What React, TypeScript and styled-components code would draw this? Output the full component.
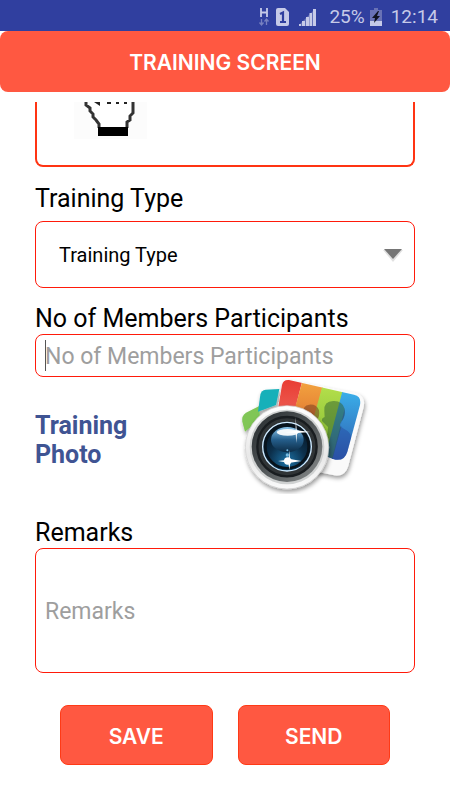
import React from "react";
import styled, { createGlobalStyle, css } from "styled-components";

const GlobalStyle = createGlobalStyle`
  *, *::before, *::after { box-sizing: border-box; }
  body {
    margin: 0;
    background: #fff;
    color: #000;
    font-family: Roboto, "Liberation Sans", sans-serif;
  }
`;

const Screen = styled.div`
  display: flex;
  flex-direction: column;
  min-height: 100vh;
  overflow: hidden;
`;

const StatusBar = styled.div`
  display: flex;
  align-items: center;
  justify-content: flex-end;
  height: 31px;
  padding: 3px 12px 0 0;
  background: #303f9f;
  color: #c6cae8;
  font-size: 19px;
  line-height: 24px;
`;

const StatusIcons = styled.svg`
  width: 58px;
  height: 20px;
  margin-right: 13px;
`;

const Battery = styled.svg`
  width: 12px;
  height: 18px;
  margin: 0 9px 0 5px;
`;

const TitleBar = styled.header`
  display: flex;
  align-items: center;
  justify-content: center;
  height: 61px;
  padding-top: 3px;
  border-radius: 8px;
  background: #ff5841;
`;

const Title = styled.h1`
  margin: 0;
  color: #fff;
  font-family: Inter, Roboto, sans-serif;
  font-size: 21px;
  font-weight: 600;
  line-height: 26px;
`;

const Form = styled.form`
  display: flex;
  flex-direction: column;
  padding: 10px 35px 35px;
`;

const outline = css`
  border: 1px solid #ff1a0a;
  border-radius: 8px;
  background: #fff;
`;

const PointerPanel = styled.div`
  height: 65px;
  margin-bottom: 17px;
  padding-left: 37px;
  border: 2px solid #ff3413;
  border-top: 0;
  border-radius: 0 0 8px 8px;
`;

const PointerArt = styled.svg`
  display: block;
  width: 74px;
  height: 38px;
`;

const Label = styled.label`
  font-size: 25px;
  line-height: 30px;
`;

const SelectFrame = styled.div`
  ${outline}
  display: grid;
  align-items: center;
  height: 67px;
  margin: 7px 0 16px;
`;

const Select = styled.select`
  grid-area: 1 / 1;
  width: 100%;
  height: 100%;
  padding: 0 48px 0 23px;
  border: 0;
  outline: 0;
  appearance: none;
  background: transparent;
  color: #000;
  font: 20px Roboto, sans-serif;
`;

const Arrow = styled.svg`
  grid-area: 1 / 1;
  justify-self: end;
  width: 22px;
  height: 16px;
  margin-right: 10px;
  pointer-events: none;
`;

const InputFrame = styled.div`
  ${outline}
  display: grid;
  align-items: center;
  height: 43px;
`;

const Input = styled.input`
  grid-area: 1 / 1;
  width: 100%;
  height: 100%;
  padding: 2px 9px 0;
  border: 0;
  outline: 0;
  background: transparent;
  color: #000;
  font: 23px Roboto, sans-serif;
  &::placeholder { color: #9e9e9e; opacity: 1; }
`;

const Caret = styled.span`
  grid-area: 1 / 1;
  width: 1px;
  height: 31px;
  margin-left: 9px;
  background: #555;
  pointer-events: none;
`;

const PhotoRow = styled.div`
  display: grid;
  grid-template-columns: 1fr 175px;
  align-items: center;
  margin-bottom: 24px;
`;

const PhotoLabel = styled.span`
  max-width: 120px;
  padding-top: 8px;
  color: #3f5493;
  font-size: 25px;
  font-weight: 700;
  line-height: 29px;
`;

const PhotoButton = styled.button`
  justify-self: start;
  padding: 0;
  border: 0;
  background: none;
  cursor: pointer;
`;

const CameraArt = styled.svg`
  display: block;
  width: 130px;
  height: 117px;
`;

const TextArea = styled.textarea`
  ${outline}
  display: block;
  width: 100%;
  height: 125px;
  padding: 49px 9px 46px;
  outline: 0;
  resize: none;
  overflow: hidden;
  font: 23px/28px Roboto, sans-serif;
  &::placeholder { color: #9e9e9e; opacity: 1; }
`;

const Actions = styled.div`
  display: grid;
  grid-template-columns: 1fr 1fr;
  gap: 25px;
  padding: 32px 25px 0;
`;

const ActionButton = styled.button`
  height: 60px;
  padding: 3px 0 0;
  border: 1px solid #ff3a16;
  border-radius: 8px;
  background: #ff5841;
  color: #fff;
  font: 600 21px Inter, Roboto, sans-serif;
  cursor: pointer;
`;

function Signals() {
  return (
    <StatusIcons viewBox="0 0 58 20" aria-hidden="true">
      <path d="M3 1V10M9 1V10M3 5.5H9" stroke="#c6cae8" strokeWidth="1.8" fill="none" />
      <path d="M3.5 12V17M1.5 15.5L3.5 18L5.5 15.5M8.5 18V13M6.5 14.5L8.5 12L10.5 14.5" stroke="#7780c0" strokeWidth="1.3" fill="none" />
      <path d="M20 1H27L31 5V17Q31 19 29 19H20Q18 19 18 17V3Q18 1 20 1Z" fill="#c6cae8" />
      <path d="M22 7L25 5.5V15M22 15H28" stroke="#303f9f" strokeWidth="2.2" fill="none" />
      <path d="M41 17H43V19H41ZM44 14H47V19H44ZM48 10H51V19H48ZM51.5 6H54V19H51.5ZM55 2H58V19H55Z" fill="#c6cae8" />
      <path d="M41 18L57 2V19H41Z" fill="#c6cae8" opacity="0.35" />
    </StatusIcons>
  );
}

function Hand() {
  return (
    <PointerArt viewBox="0 0 74 38" aria-hidden="true">
      <rect width="73" height="37" fill="#fcfcfc" />
      <path d="M14 0L18 6L20 11L23 16L26 21V27H54V20L57 13L60 10V0Z" fill="#fff" />
      <path d="M12 0V3L16 6V9L19 12V15L22 18L25 22V26M59 0V11L56 14V18L53 20V26" fill="none" stroke="#333" strokeWidth="3" />
      <path d="M20 0L26 4V0ZM33 0H37V2H33ZM42 0H45V2H42ZM50 0H53V2H50Z" fill="#222" />
      <rect x="24" y="25" width="30" height="9" fill="#000" />
    </PointerArt>
  );
}

function Camera() {
  return (
    <CameraArt viewBox="30 24 390 351" aria-hidden="true">
      <defs>
        <linearGradient id="red" x1="0" y1="0" x2="0" y2="1"><stop stopColor="#e8392f" /><stop offset="1" stopColor="#ef6b62" /></linearGradient>
        <linearGradient id="orange" x1="0" y1="0" x2="0" y2="1"><stop stopColor="#f4a640" /><stop offset="1" stopColor="#d9652c" /></linearGradient>
        <linearGradient id="green" x1="0" y1="0" x2="0" y2="1"><stop stopColor="#b5e04c" /><stop offset="1" stopColor="#7fb62f" /></linearGradient>
        <linearGradient id="blue" x1="0" y1="0" x2="0" y2="1"><stop stopColor="#3bb2ec" /><stop offset="1" stopColor="#2d55a8" /></linearGradient>
        <linearGradient id="rim" x1="0" y1="0" x2="0" y2="1"><stop stopColor="#fff" /><stop offset="0.6" stopColor="#e8e8e8" /><stop offset="1" stopColor="#fafafa" /></linearGradient>
        <linearGradient id="barrel" x1="0" y1="0" x2="1" y2="1"><stop stopColor="#252a2d" /><stop offset="0.5" stopColor="#505557" /><stop offset="1" stopColor="#8b8e8e" /></linearGradient>
        <radialGradient id="glass" cx="0.5" cy="0.8" r="0.75"><stop stopColor="#1b71a5" /><stop offset="0.5" stopColor="#0c304c" /><stop offset="1" stopColor="#071522" /></radialGradient>
        <linearGradient id="dome" x1="0" y1="0" x2="0" y2="1"><stop stopColor="#8cc6ec" /><stop offset="0.5" stopColor="#255e8b" /><stop offset="1" stopColor="#0d2c46" /></linearGradient>
        <clipPath id="print"><path d="M177 33L372 77Q396 83 390 108L352 248Q344 276 316 272L126 225L156 48Q160 31 177 33Z" /></clipPath>
        <filter id="shade" x="-20%" y="-20%" width="140%" height="150%"><feDropShadow dx="3" dy="8" stdDeviation="7" floodOpacity="0.4" /></filter>
      </defs>
      <g filter="url(#shade)">
        <path d="M88 111L48 131Q34 140 37 158L45 188L90 150Z" fill="#80c657" />
        <path d="M148 60L107 62Q94 64 91 77L84 128L138 108Z" fill="#17b0b9" />
        <path d="M175 33L374 72Q408 80 401 114L355 290Q346 323 314 319L250 306L126 215L156 48Q160 30 175 33Z" fill="#fafafa" />
      </g>
      <g clipPath="url(#print)">
        <path d="M140 20H221L180 180H110Z" fill="url(#red)" />
        <path d="M219 30L280 48L237 210L180 170Z" fill="url(#orange)" />
        <path d="M279 45L340 65L288 265L222 250Z" fill="url(#green)" />
        <path d="M339 60L410 80L350 290L286 260Z" fill="url(#blue)" />
        <path d="M221 134Q217 108 238 107Q260 105 267 124Q270 141 261 153L270 180H240Z" fill="#783f20" opacity="0.55" />
        <path d="M283 126Q281 96 310 96Q337 95 344 119Q347 143 333 160Q327 170 333 176L308 268L287 262L294 174L276 156Q274 147 284 144Z" fill="#2f6030" opacity="0.5" />
        <path d="M344 119Q347 143 333 160Q329 175 344 181Q367 192 364 215L350 280L306 270L333 165Z" fill="#233f98" opacity="0.4" />
      </g>
      <circle cx="171" cy="235" r="125" fill="url(#rim)" stroke="#d0d0d0" strokeWidth="2" filter="url(#shade)" />
      <circle cx="171" cy="234" r="112" fill="#cfd1d1" />
      <circle cx="171" cy="233" r="106" fill="url(#barrel)" />
      <circle cx="171" cy="233" r="89" fill="#303436" stroke="#191d20" strokeWidth="7" />
      <circle cx="171" cy="233" r="73" fill="url(#glass)" stroke="#cfeaff" strokeWidth="4" />
      <circle cx="171" cy="233" r="65" fill="none" stroke="#08131c" strokeWidth="8" />
      <ellipse cx="172" cy="212" rx="49" ry="38" fill="url(#dome)" />
      <ellipse cx="173" cy="190" rx="33" ry="10" fill="#fff" opacity="0.92" />
      <circle cx="173" cy="276" r="11" fill="#fff" />
      <circle cx="172" cy="258" r="5" fill="#77bce1" />
      <circle cx="172" cy="244" r="3" fill="#77bce1" />
      <path d="M197 144L200 184L241 189L201 192L199 222L197 192L165 190L197 186ZM178 243L180 270L214 276L181 281L178 303L175 281L144 276L176 272Z" fill="#fff" />
    </CameraArt>
  );
}

export default function App() {
  return (
    <Screen>
      <GlobalStyle />
      <StatusBar>
        <Signals />
        <span>25%</span>
        <Battery viewBox="0 0 12 18" aria-hidden="true">
          <path d="M4 0H8V2H12V18H0V2H4Z" fill="#6972b5" />
          <path d="M0 13H12V18H0Z" fill="#c6cae8" />
          <path d="M8 3L2 10H5L4 15L10 8H7L9 3Z" fill="#10131f" />
        </Battery>
        <span>12:14</span>
      </StatusBar>
      <TitleBar>
        <Title>TRAINING SCREEN</Title>
      </TitleBar>
      <Form onSubmit={(e) => e.preventDefault()}>
        <PointerPanel>
          <Hand />
        </PointerPanel>
        <Label htmlFor="type">Training Type</Label>
        <SelectFrame>
          <Select id="type" defaultValue="none">
            <option value="none">Training Type</option>
          </Select>
          <Arrow viewBox="0 0 22 16" aria-hidden="true">
            <path d="M1 3H21L11 15Z" fill="#000" opacity="0.12" />
            <path d="M2 2H20L11 12Z" fill="#757575" />
          </Arrow>
        </SelectFrame>
        <Label htmlFor="members">No of Members Participants</Label>
        <InputFrame>
          <Input id="members" placeholder="No of Members Participants" />
          <Caret />
        </InputFrame>
        <PhotoRow>
          <PhotoLabel id="photo-label">Training Photo</PhotoLabel>
          <PhotoButton type="button" aria-labelledby="photo-label">
            <Camera />
          </PhotoButton>
        </PhotoRow>
        <Label htmlFor="remarks">Remarks</Label>
        <TextArea id="remarks" placeholder="Remarks" />
        <Actions>
          <ActionButton type="submit">SAVE</ActionButton>
          <ActionButton type="button">SEND</ActionButton>
        </Actions>
      </Form>
    </Screen>
  );
}
